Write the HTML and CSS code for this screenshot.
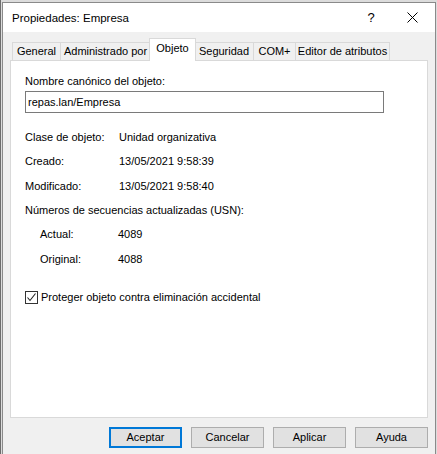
FILE: index.html
```html
<!DOCTYPE html>
<html>
<head>
<meta charset="utf-8">
<link rel="stylesheet" href="styles.css">
</head>
<body>
<div class="desktop">
  <div class="window">
    <div class="titlebar">
      <span class="title">Propiedades: Empresa</span>
      <span class="tb-help">?</span>
      <span class="tb-close">
        <svg width="11" height="11" viewBox="0 0 11 11"><path d="M0.5 0.5 L10.5 10.5 M10.5 0.5 L0.5 10.5" stroke="#000" stroke-width="1" fill="none"/></svg>
      </span>
    </div>
    <div class="client">
      <div class="tabs">
        <div class="tab t-general">General</div>
        <div class="tab t-admin">Administrado por</div>
        <div class="tab active t-obj">Objeto</div>
        <div class="tab t-seg">Seguridad</div>
        <div class="tab t-com">COM+</div>
        <div class="tab t-edit">Editor de atributos</div>
      </div>
      <div class="panel">
        <div class="lbl-top">Nombre canónico del objeto:</div>
        <div class="textbox">repas.lan/Empresa</div>
        <div class="row r-clase"><span class="k">Clase de objeto:</span><span class="v">Unidad organizativa</span></div>
        <div class="row r-creado"><span class="k">Creado:</span><span class="v">13/05/2021 9:58:39</span></div>
        <div class="row r-mod"><span class="k">Modificado:</span><span class="v">13/05/2021 9:58:40</span></div>
        <div class="row r-usn">Números de secuencias actualizadas (USN):</div>
        <div class="row sub r-act"><span class="k">Actual:</span><span class="v">4089</span></div>
        <div class="row sub r-orig"><span class="k">Original:</span><span class="v">4088</span></div>
        <div class="check">
          <span class="box"><svg width="11" height="11" viewBox="0 0 11 11"><path d="M1.5 5.5 L4 8.5 L9.5 1.5" stroke="#222" stroke-width="1.1" fill="none"/></svg></span>
          <span>Proteger objeto contra eliminación accidental</span>
        </div>
      </div>
      <div class="buttons">
        <div class="btn default">Aceptar</div>
        <div class="btn">Cancelar</div>
        <div class="btn">Aplicar</div>
        <div class="btn">Ayuda</div>
      </div>
    </div>
  </div>
</div>
</body>
</html>
```
FILE: styles.css
```css
html, body {
  margin: 0;
  padding: 0;
  width: 437px;
  height: 454px;
  overflow: hidden;
  background: #e6e6e6;
}
body {
  font-family: "Liberation Sans", Arial, sans-serif;
  font-size: 11px;
  color: #000;
}
.desktop {
  height: 454px;
  padding: 2px 0 0 2px;
  box-sizing: border-box;
  border-left: 1px solid #6d6d6d;
  background: #dcdcdc;
}
.window {
  width: 432px;
  height: 460px;
  border: 1px solid #8a8a8a;
  background: #f0f0f0;
  display: flex;
  flex-direction: column;
  margin-left: -1px;
}
.titlebar {
  height: 29px;
  background: #fff;
  display: flex;
  align-items: center;
  padding-left: 9px;
}
.title {
  flex: 1;
  font-size: 11.5px;
  line-height: 16px;
  margin-top: 1px;
}
.tb-help {
  width: 20px;
  text-align: center;
  font-size: 13px;
  margin-right: 26px;
}
.tb-close {
  width: 11px;
  height: 11px;
  margin-right: 17px;
  display: flex;
}
.client {
  padding: 0 7px;
  display: flex;
  flex-direction: column;
}
.tabs {
  display: flex;
  height: 28px;
  align-items: flex-end;
  padding-left: 2px;
  position: relative;
  z-index: 2;
}
.tab {
  height: 18px;
  line-height: 17px;
  border: 1px solid #d9d9d9;
  border-bottom: none;
  margin-left: -1px;
  box-sizing: border-box;
  background: #f0f0f0;
  white-space: nowrap;
  text-align: center;
}
.tab:first-child { margin-left: 0; }
.tab.active {
  background: #fff;
  height: 23px;
  line-height: 19px;
  margin-bottom: -1px;
  margin-left: -2px;
  margin-right: -1px;
  position: relative;
  z-index: 3;
}
.t-general { width: 49px; }
.t-admin { width: 91px; }
.t-obj { width: 47px; }
.t-seg { width: 60px; }
.t-com { width: 43px; }
.t-edit { width: 95px; }
.panel {
  height: 358px;
  box-sizing: border-box;
  border: 1px solid #d9d9d9;
  background: #fff;
  padding: 12px 0 0 14px;
  position: relative;
  z-index: 1;
}
.lbl-top {
  line-height: 16px;
}
.textbox {
  margin-top: 2px;
  width: 355px;
  height: 20px;
  border: 1px solid #7a7a7a;
  line-height: 20px;
  padding-left: 2px;
  box-sizing: content-box;
}
.row {
  display: flex;
  line-height: 16px;
}
.row .k { width: 94px; }
.row.sub { padding-left: 15px; }
.row.sub .k { width: 78px; }
.r-clase { margin-top: 16px; }
.r-creado { margin-top: 8px; }
.r-mod { margin-top: 9px; }
.r-usn { margin-top: 8px; }
.r-act { margin-top: 8px; }
.r-orig { margin-top: 9px; }
.check {
  margin-top: 22px;
  display: flex;
  align-items: center;
  line-height: 16px;
}
.check .box {
  width: 11px;
  height: 11px;
  border: 1px solid #333;
  background: #fff;
  margin-right: 3px;
  display: flex;
}
.buttons {
  display: flex;
  justify-content: flex-end;
  gap: 9px;
  margin-top: 9px;
}
.btn {
  width: 71px;
  height: 19px;
  border: 1px solid #adadad;
  background: #e1e1e1;
  text-align: center;
  line-height: 19px;
}
.btn.default {
  border: 2px solid #0078d7;
  width: 69px;
  height: 17px;
  line-height: 17px;
}
```
